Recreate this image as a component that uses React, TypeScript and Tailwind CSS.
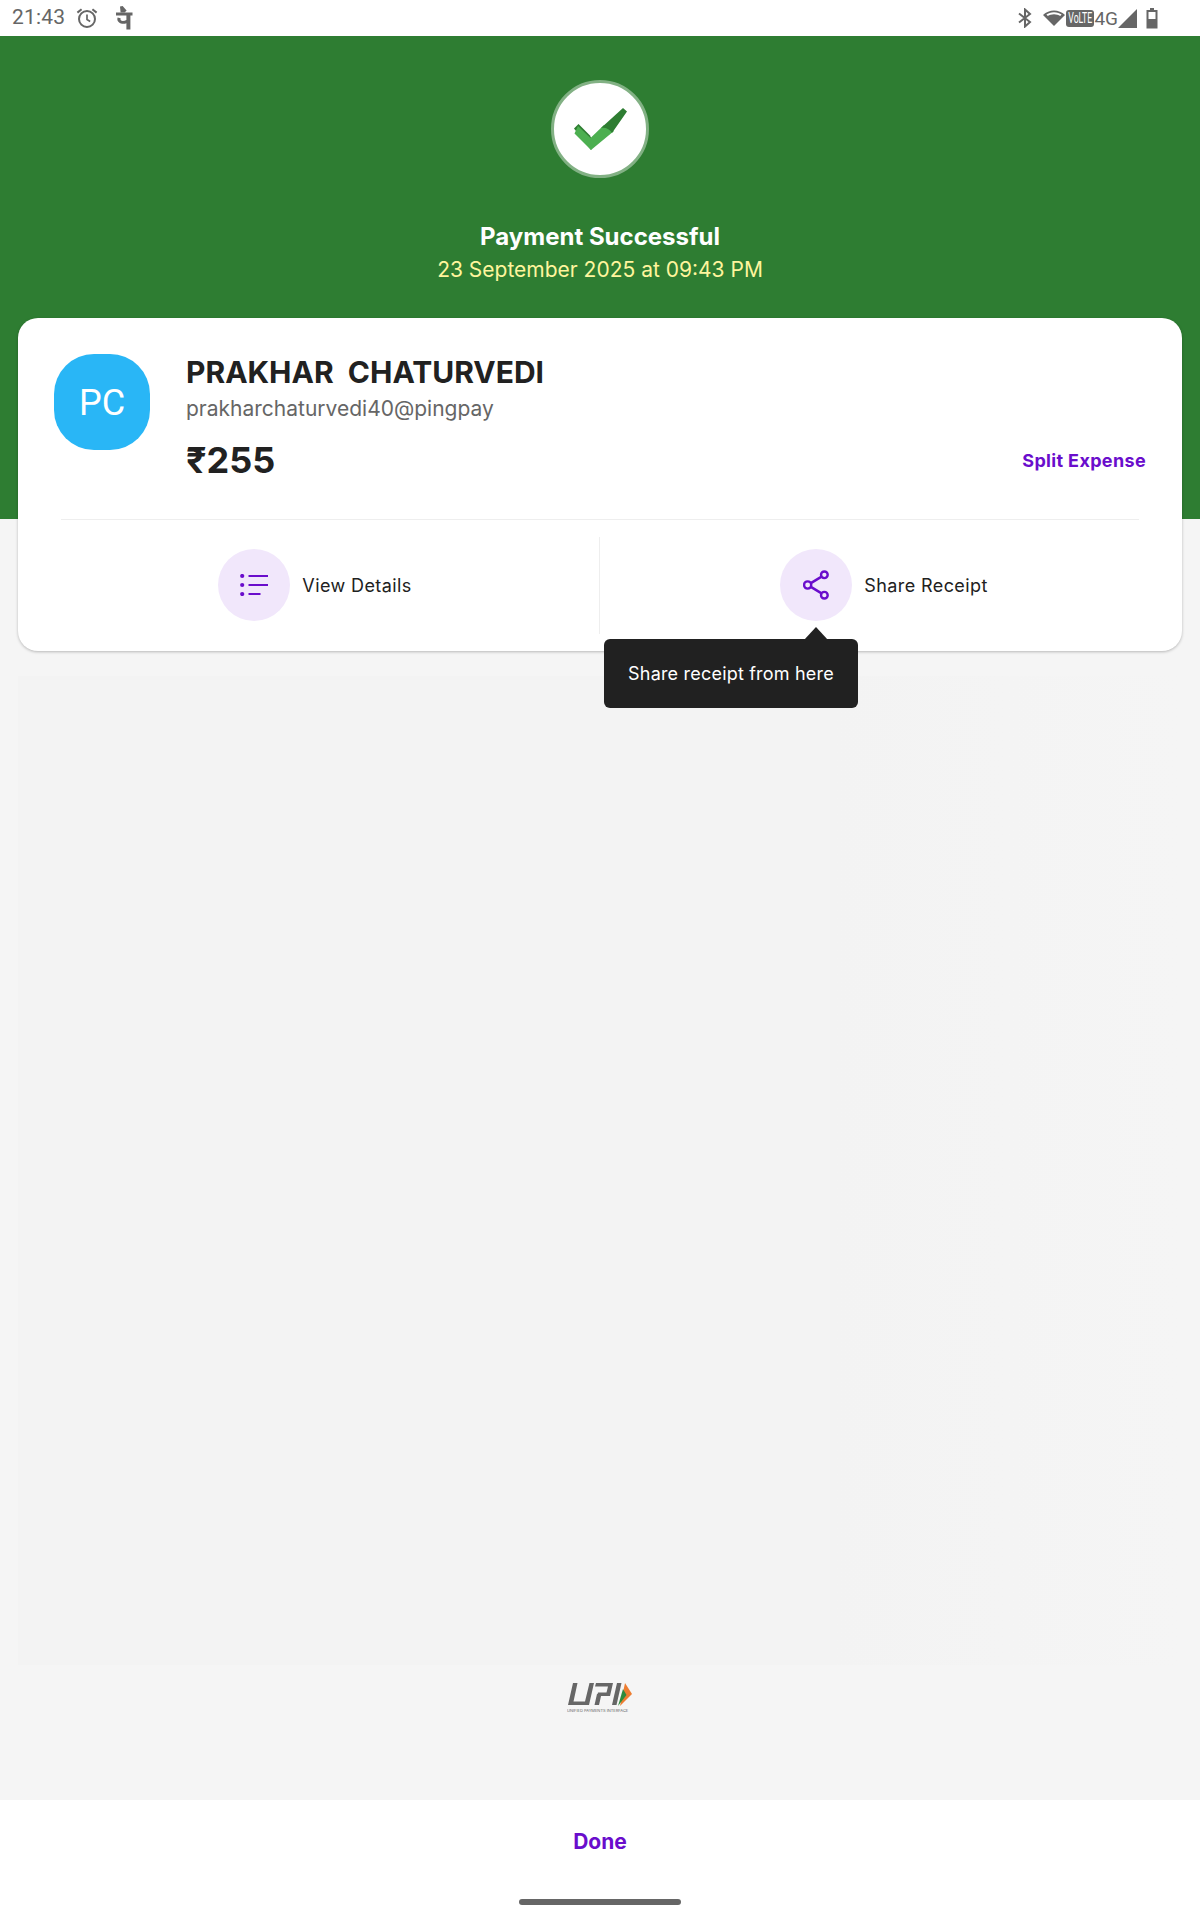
const inter = { fontFamily: "Inter, sans-serif" };

function StatusBar() {
  return (
    <div className="h-9 bg-white flex items-center justify-between pl-3 pr-[42px] text-[#666666]">
      <div className="flex items-center">
        <span className="text-[21px] font-['Roboto',sans-serif] tracking-[0.2px]">21:43</span>
        <svg className="ml-[10px]" width="24" height="24" viewBox="0 0 24 24" fill="none" stroke="#666666" strokeWidth="2">
          <circle cx="12" cy="13" r="8" />
          <path d="M12 8.5V13.5L15.2 15.4" strokeWidth="1.7" />
          <path d="M2.4 6.6 6.6 3.2M21.6 6.6 17.4 3.2" />
        </svg>
        <svg className="ml-[17px]" width="17" height="24" viewBox="0 0 17 24" fill="#666666">
          <path d="M0 6.5H16.5V9.5H14.4V23.5H10.4V17.2C9 17.8 7.6 18 6.2 17.7 2.6 17 0.6 14.6 1.6 11.4L4.6 12.2C4 14 5.2 14.9 6.8 14.9 8 14.9 9.4 14.5 10.4 14V9.5H0Z" />
          <path d="M4.6 6.5 4 0.6 6.6 0 10.6 4.6 8.6 6.5Z" />
        </svg>
      </div>
      <div className="flex items-center">
        <svg width="14" height="20" viewBox="0 0 14 20" fill="none" stroke="#666666" strokeWidth="2">
          <path d="M1 5.5 12 14 7 18.5V1.5L12 6 1 14.5" />
        </svg>
        <svg className="ml-[10px]" width="24" height="20" viewBox="0 0 24 20" fill="#666666">
          <path d="M12 18 1 7C7 1 17 1 23 7Z" />
          <path d="M12 4.2C8.8 4.2 6.2 5.2 4.4 6.6L5.8 8C7.4 7 9.6 6.2 12 6.2S16.6 7 18.2 8L19.6 6.6C17.8 5.2 15.2 4.2 12 4.2Z" fill="#ffffff" />
        </svg>
        <span className="h-[17px] w-[28px] rounded-[3px] bg-[#666666] text-white text-[14px] leading-[17px] whitespace-nowrap flex justify-center font-['Roboto',sans-serif]">
          <span className="scale-x-[0.62]">VoLTE</span>
        </span>
        <span className="text-[19px] leading-none font-['Roboto',sans-serif] -mr-[1px]">4G</span>
        <svg width="21" height="21" viewBox="0 0 21 21" fill="#666666">
          <path d="M20 1V20H1Z" />
        </svg>
        <svg className="ml-[8px]" width="12" height="21" viewBox="0 0 12 21">
          <path d="M4 0H8V2H11.5V20.5H0.5V2H4Z" fill="#666666" />
          <path d="M2.5 4H9.5V11H2.5Z" fill="#ffffff" />
        </svg>
      </div>
    </div>
  );
}

function ActionButton({ label, children }: { label: string; children: React.ReactNode }) {
  return (
    <div className="flex items-center gap-3">
      <div className="w-[72px] h-[72px] rounded-full bg-[#f1e7fb] flex items-center justify-center">
        {children}
      </div>
      <span className="pt-[2px] text-[18px] text-[#212121] tracking-[0.4px]">{label}</span>
    </div>
  );
}

export default function App() {
  return (
    <div className="w-[1200px] h-[1920px] bg-[#f5f5f5] flex flex-col overflow-hidden" style={inter}>
      <StatusBar />
      <div className="h-[483px] bg-[#2e7d32] flex flex-col items-center pt-[44px]">
        <div className="w-[98px] h-[98px] rounded-full bg-white border-[3px] border-[#82b184] flex items-center justify-center">
          <svg width="56" height="44" viewBox="0 0 56 44">
            <path d="M2 21.5 6.5 17 18 28.5 22 37 19 43Z" fill="#2e7d32" />
            <path d="M19 43 2.5 26.5 6 19 18.5 31 32 18 42 24Z" fill="#4caf50" />
            <path d="M29 21 51 1 55 4.5 40 26C38 22 33 20 29 21Z" fill="#2e7d32" />
          </svg>
        </div>
        <div className="mt-[44px] text-[24px] leading-[29px] font-bold text-white">Payment Successful</div>
        <div className="mt-[4px] text-[21px] leading-[29px] text-[#fff59d]">23 September 2025 at 09:43 PM</div>
      </div>

      <div className="relative mx-[18px] -mt-[201px] h-[333px] bg-white rounded-[20px] shadow-[0_1px_3px_rgba(0,0,0,0.25)]">
        <div className="h-[202px] mx-[43px] border-b border-[#eeeeee] flex">
          <div className="-ml-[7px] mt-[36px] w-[96px] h-[96px] rounded-[40px] bg-[#29b6f6] flex items-center justify-center pt-[2px] text-white text-[36px] font-['Roboto',sans-serif]">
            PC
          </div>
          <div className="ml-[36px] mt-[34px] flex-1">
            <div className="text-[30px] leading-[40px] font-bold text-[#212121] whitespace-pre">PRAKHAR  CHATURVEDI</div>
            <div className="mt-[2px] text-[21px] leading-[30px] text-[#666666]">prakharchaturvedi40@pingpay</div>
            <div className="mt-[11px] flex items-center justify-between">
              <span className="text-[36px] leading-[50px] font-bold text-[#212121]">₹255</span>
              <span className="text-[18px] font-bold text-[#6a0dcc] tracking-[0.35px] -mr-[7px]">Split Expense</span>
            </div>
          </div>
        </div>
        <div className="flex h-[131px]">
          <div className="w-[581px] shrink-0 flex items-center justify-center pl-[13px] pb-[2px]">
            <ActionButton label="View Details">
              <svg width="28" height="22" viewBox="0 0 28 22" fill="none" stroke="#6a0dcc" strokeWidth="2">
                <circle cx="2.2" cy="2" r="2.1" fill="#6a0dcc" stroke="none" />
                <circle cx="2.2" cy="11" r="2.1" fill="#6a0dcc" stroke="none" />
                <circle cx="2.2" cy="20" r="2.1" fill="#6a0dcc" stroke="none" />
                <path d="M8.5 2H28M8.5 11H28M8.5 20H20.5" />
              </svg>
            </ActionButton>
          </div>
          <div className="w-px my-[17px] bg-[#eeeeee]" />
          <div className="flex-1 flex items-center justify-center pr-[14px] pb-[2px]">
            <ActionButton label="Share Receipt">
              <svg width="26" height="30" viewBox="0 0 28 32" fill="none" stroke="#6a0dcc" strokeWidth="2.6">
                <circle cx="23" cy="5" r="3.6" />
                <circle cx="5" cy="16" r="3.9" />
                <circle cx="23" cy="27" r="3.6" />
                <path d="M8.5 14 20 7M8.5 18 20 25" />
              </svg>
            </ActionButton>
          </div>
        </div>
        <div className="absolute left-[586px] top-[321px] w-[254px] h-[69px] bg-[#212121] rounded-[6px] flex items-center justify-center text-white text-[18px] tracking-[0.2px]">
          Share receipt from here
          <span className="absolute left-[200px] -top-[12px] w-0 h-0 border-l-[12px] border-r-[12px] border-b-[13px] border-l-transparent border-r-transparent border-b-[#212121]" />
        </div>
      </div>

      <div className="mx-[18px] mt-[25px] h-[989px] bg-[linear-gradient(90deg,#f3f3f3_0%,#f3f3f3_70%,#f5f5f5_100%)]" />

      <div className="h-[135px] flex justify-center pt-[17px]">
        <svg width="66" height="32" viewBox="0 0 66 32">
          <path d="M6 1H10.5L6.5 19.5H18L22.5 1H27L22 23H1Z" fill="#666666" />
          <path d="M29 1H46L43 14H30L31 10.5H39.5L41 4.5H28Z" fill="#666666" />
          <path d="M30 12H34.5L32 23H27.5Z" fill="#666666" />
          <path d="M50 1H54.5L49.5 23H45Z" fill="#666666" />
          <path d="M58 1 65 12 53 24Z" fill="#ed7d31" />
          <path d="M56 7 59.5 13 51 24Z" fill="#2e8b3d" />
          <text x="0" y="30" fontSize="4" fill="#666666">UNIFIED PAYMENTS INTERFACE</text>
        </svg>
      </div>

      <div className="flex-1 bg-white flex flex-col items-center">
        <div className="mt-[27px] text-[21px] leading-[30px] font-bold text-[#6a0dcc]">Done</div>
        <div className="mt-[42px] w-[162px] h-[6px] rounded-full bg-[#666666]" />
      </div>
    </div>
  );
}
